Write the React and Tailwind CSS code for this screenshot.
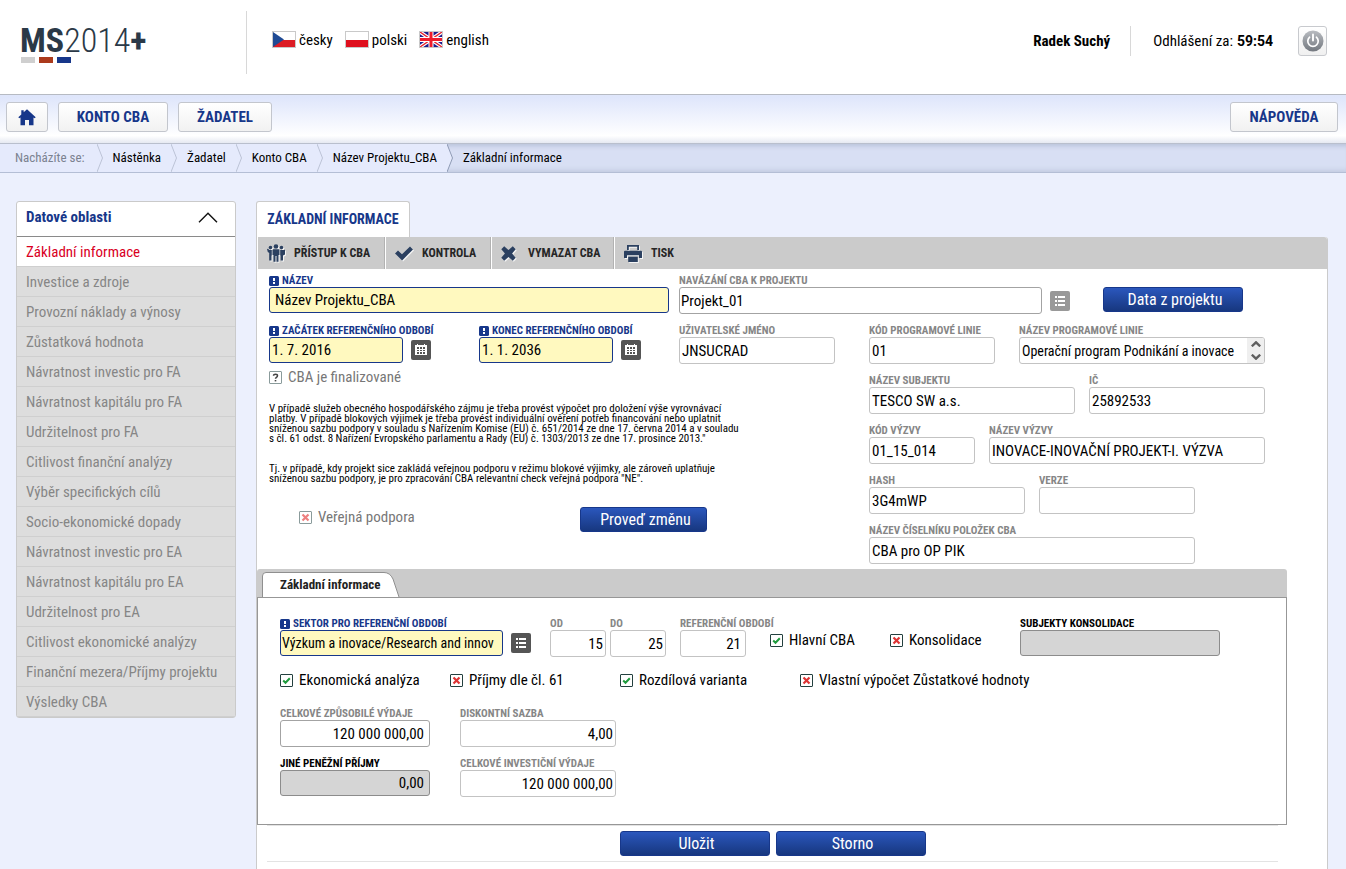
import { useState } from "react";

const FONT = "font-['Roboto_Condensed','Roboto',sans-serif]";

const DATA_AREAS = [
  "Základní informace",
  "Investice a zdroje",
  "Provozní náklady a výnosy",
  "Zůstatková hodnota",
  "Návratnost investic pro FA",
  "Návratnost kapitálu pro FA",
  "Udržitelnost pro FA",
  "Citlivost finanční analýzy",
  "Výběr specifických cílů",
  "Socio-ekonomické dopady",
  "Návratnost investic pro EA",
  "Návratnost kapitálu pro EA",
  "Udržitelnost pro EA",
  "Citlivost ekonomické analýzy",
  "Finanční mezera/Příjmy projektu",
  "Výsledky CBA",
];

/* ---------- icons ---------- */

function FlagCz() {
  return (
    <svg width="24" height="17" viewBox="0 0 24 17" aria-hidden="true">
      <rect width="24" height="17" fill="#c9c9c9" />
      <rect x="1" y="1" width="22" height="8" fill="#fff" />
      <rect x="1" y="9" width="22" height="7" fill="#dc1c24" />
      <path d="M1 1 L12 8.500 L1 16 Z" fill="#1f4a94" />
    </svg>
  );
}

function FlagPl() {
  return (
    <svg width="24" height="17" viewBox="0 0 24 17" aria-hidden="true">
      <rect width="24" height="17" fill="#c9c9c9" />
      <rect x="1" y="1" width="22" height="8" fill="#fff" />
      <rect x="1" y="9" width="22" height="7" fill="#df0f1d" />
    </svg>
  );
}

function FlagGb() {
  return (
    <svg width="24" height="17" viewBox="0 0 24 17" aria-hidden="true">
      <rect width="24" height="17" fill="#c9c9c9" />
      <svg x="1" y="1" width="22" height="15" viewBox="0 0 22 15">
        <rect width="22" height="15" fill="#1c1c8c" />
        <path d="M0 0L22 15M22 0L0 15" stroke="#fff" strokeWidth="3.600" />
        <path d="M0 0L22 15M22 0L0 15" stroke="#e8202c" strokeWidth="1.400" />
        <path d="M11 0V15M0 7.500H22" stroke="#fff" strokeWidth="5" />
        <path d="M11 0V15M0 7.500H22" stroke="#ee1c2c" strokeWidth="3" />
      </svg>
    </svg>
  );
}

function HomeIcon() {
  return (
    <svg width="18" height="17" viewBox="0 0 18 17" fill="#17378a" aria-hidden="true">
      <path d="M9 0.300 L5.700 3.300 V1.300 H3.300 V5.500 L0.300 8.300 L1.300 9.300 L2.500 8.500 V16.300 H7 V11 H11 V16.300 H15.500 V8.500 L16.700 9.300 L17.700 8.300 Z" />
    </svg>
  );
}

function PowerIcon() {
  return (
    <svg width="22" height="22" viewBox="0 0 22 22" aria-hidden="true">
      <defs>
        <linearGradient id="power" x1="0" y1="0" x2="0" y2="1">
          <stop offset="0" stopColor="#b9bcc1" />
          <stop offset="1" stopColor="#73787f" />
        </linearGradient>
      </defs>
      <circle cx="11" cy="11" r="10.500" fill="url(#power)" />
      <path d="M7.600 7.200 A5.200 5.200 0 1 0 14.400 7.200" fill="none" stroke="#fff" strokeWidth="1.700" strokeLinecap="round" />
      <path d="M11 4.500 V10.500" stroke="#fff" strokeWidth="1.900" strokeLinecap="round" />
    </svg>
  );
}

function PeopleIcon() {
  return (
    <svg width="18" height="18" viewBox="0 0 18 18" fill="#2b4060" aria-hidden="true">
      <circle cx="9" cy="2.500" r="2.300" />
      <path d="M6.500 5.200 H11.500 Q12.500 5.200 12.500 6.400 V11 H11.500 V17.700 H9.500 V12 H8.500 V17.700 H6.500 V11 H5.500 V6.400 Q5.500 5.200 6.500 5.200Z" />
      <circle cx="3.500" cy="3.600" r="1.800" />
      <path d="M0 5 L1.100 4.700 L2.200 6 H4.800 V11.500 H4.500 V16.500 H2.200 V9 L0.800 8 Z" />
      <circle cx="14.500" cy="3.600" r="1.800" />
      <path d="M18 5.500 V10.500 L16 11.500 V16.500 H13.600 V11.500 H13.200 V6 H17.200 Z" />
    </svg>
  );
}

function CheckIcon() {
  return (
    <svg width="18" height="15" viewBox="0 0 18 15" fill="#2b4060" aria-hidden="true">
      <path d="M0 7.400 L3 4.400 L7 8.200 L15 0.600 L18 3.400 L7.100 14.400 Z" />
    </svg>
  );
}

function CrossIcon() {
  return (
    <svg width="15" height="15" viewBox="0 0 15 15" fill="#2b4060" aria-hidden="true">
      <path d="M3.200 0.300 L7.500 3.900 L11.800 0.300 L14.700 3.200 L11.100 7.500 L14.700 11.800 L11.800 14.700 L7.500 11.100 L3.200 14.700 L0.300 11.800 L3.900 7.500 L0.300 3.200 Z" />
    </svg>
  );
}

function PrinterIcon() {
  return (
    <svg width="18" height="17" viewBox="0 0 18 17" fill="#2b4060" aria-hidden="true">
      <path d="M3 0 H15 V5 H13.200 V1.800 H4.800 V5 H3 Z" />
      <path d="M1 5.800 H17 Q18 5.800 18 6.800 V13 H15 V10.300 H3 V13 H0 V6.800 Q0 5.800 1 5.800Z" />
      <path d="M4.200 11.700 H13.800 V17 H4.200 Z" />
    </svg>
  );
}

function ListIcon() {
  return (
    <svg width="10" height="10" viewBox="0 0 10 10" fill="#fff" aria-hidden="true">
      <path d="M0 0H2V2H0ZM3 0H10V2H3ZM0 4H2V6H0ZM3 4H10V6H3ZM0 8H2V10H0ZM3 8H10V10H3Z" />
    </svg>
  );
}

function CalendarIcon() {
  return (
    <svg width="12" height="12" viewBox="0 0 12 12" aria-hidden="true">
      <path d="M0 1H2V0H3V1H9V0H10V1H12V11H0Z" fill="#fff" />
      <path d="M2 3H4V5H2ZM5 3H7V5H5ZM8 3H10V5H8ZM2 6H4V7H2ZM5 6H7V7H5ZM8 6H10V7H8ZM2 8H4V10H2ZM5 8H7V10H5ZM8 8H10V10H8Z" fill="#555" />
    </svg>
  );
}

function RequiredIcon() {
  return (
    <svg width="10" height="10" viewBox="0 0 10 10" className="shrink-0" aria-hidden="true">
      <rect width="10" height="10" rx="1.500" fill="#17378a" />
      <path d="M4 2H6V5H4ZM4 6H6V8H4Z" fill="#fff" />
    </svg>
  );
}

/* ---------- form parts ---------- */

const FIELD_TONES = {
  plain: "h-[27px] border-[#c3c3c3] bg-white",
  strong: "h-[27px] border-[#a3a3a3] bg-white",
  required: "h-[26px] border-[#17378a] bg-[#fff9bf]",
  disabled: "h-[26px] border-[#8c8c8c] bg-[#d5d5d5]",
};

const LABEL_TONES = {
  plain: "text-[#868686]",
  strong: "text-[#868686]",
  required: "text-[#17378a]",
  disabled: "text-black",
};

function Field({ id, label, value = "", width, tone = "plain", align = "text-left px-0.5", size = "text-[15px]", children }) {
  return (
    <div className={"flex flex-col shrink-0 " + width}>
      <label htmlFor={id} className={"flex items-center gap-[3px] h-3 text-[11px] leading-3 font-bold whitespace-nowrap " + LABEL_TONES[tone]}>
        {tone === "required" && <RequiredIcon />}
        {label}
      </label>
      <div className="flex items-center gap-2">
        <input
          id={id}
          defaultValue={value}
          disabled={tone === "disabled"}
          className={"min-w-0 flex-1 border rounded-[3px] text-black " + size + " " + align + " " + FIELD_TONES[tone]}
        />
        {children}
      </div>
    </div>
  );
}

function IconButton({ label, color = "bg-[#555]", children }) {
  return (
    <button type="button" aria-label={label} className={"flex size-5 shrink-0 items-center justify-center rounded-[2px] " + color}>
      {children}
    </button>
  );
}

function PrimaryButton({ width, children }) {
  return (
    <button
      type="button"
      className={"h-[25px] shrink-0 rounded-[3px] border border-[#17378a] bg-linear-to-b from-[#2b57bd] to-[#17377f] pl-1 pt-px text-base leading-none font-normal text-white " + width}
    >
      {children}
    </button>
  );
}

function Tick({ label, state, width = "", muted = false }) {
  const [value, setValue] = useState(state);
  return (
    <label className={"flex items-center gap-1.5 text-[15px] leading-5 whitespace-nowrap shrink-0 " + width + (muted ? " text-[#777]" : " text-black")}>
      <span className="relative flex size-[13px] shrink-0">
        <input
          type="checkbox"
          checked={value === "yes"}
          onChange={() => setValue(value === "yes" ? "no" : "yes")}
          className={"size-[13px] appearance-none rounded-[1px] border bg-white " + (muted ? "border-[#8a9b9b]" : "border-[#23403f]")}
        />
        <svg width="13" height="13" viewBox="0 0 13 13" className="pointer-events-none absolute inset-0" fill="none" aria-hidden="true">
          {value === "yes" && <path d="M3.200 6.500 L5.500 8.800 L9.800 4.200" stroke="#1f9a3d" strokeWidth="2" />}
          {value === "no" && <path d="M3.500 3.500 L9.500 9.500 M9.500 3.500 L3.500 9.500" stroke={muted ? "#ee8080" : "#dd3333"} strokeWidth="2.200" />}
          {value === "unknown" && (
            <>
              <path d="M4.500 4.800 Q4.500 3.300 6.500 3.300 Q8.500 3.300 8.500 4.800 Q8.500 5.600 7.400 6.300 Q6.500 6.900 6.500 7.800" stroke="#444" strokeWidth="1.500" />
              <path d="M5.700 9H7.300V10.400H5.700Z" fill="#444" />
            </>
          )}
        </svg>
      </span>
      {label}
    </label>
  );
}

/* ---------- page parts ---------- */

function Language({ flag, name }) {
  return (
    <a href="#" className="flex items-start gap-[3px] text-[15px] leading-[18px] text-black">
      {flag}
      {name}
    </a>
  );
}

function Header() {
  return (
    <header className="flex h-[95px] items-start border-b border-[#b6bac2] bg-white">
      <a href="#" className="ml-5 mt-[21px] flex w-[226px] flex-col text-[#2b3947]">
        <span className="text-[34px] leading-[39px]">
          <b>MS</b>
          <span className="font-light">2014</span>
          <b>+</b>
        </span>
        <span className="ml-px -mt-[3px] flex gap-1">
          <i className="h-1.5 w-3.5 bg-[#cfcfcf]" />
          <i className="h-1.5 w-3.5 bg-[#ab3a1c]" />
          <i className="h-1.5 w-3.5 bg-[#17378a]" />
        </span>
      </a>
      <div className="mt-[11px] flex h-[63px] items-start gap-3 border-l border-[#d8d8d8] pl-[25px] pt-5">
        <Language flag={<FlagCz />} name="česky" />
        <Language flag={<FlagPl />} name="polski" />
        <Language flag={<FlagGb />} name="english" />
      </div>
      <div className="ml-auto mr-[19px] mt-[26px] flex h-[30px] items-center text-[15px] text-black">
        <b className="pr-5">Radek Suchý</b>
        <span className="flex h-full items-center gap-1 border-l border-[#d8d8d8] pl-[22px]">
          Odhlášení za: <b className="font-['Roboto',sans-serif] text-[14px]">59:54</b>
        </span>
        <button type="button" aria-label="Odhlásit" className="ml-[25px] flex h-[30px] w-[29px] items-center justify-center rounded-[3px] border border-[#c8cace] bg-linear-to-b from-white to-[#f0f0f0]">
          <PowerIcon />
        </button>
      </div>
    </header>
  );
}

function NavButton({ width, label, children }) {
  return (
    <button
      type="button"
      aria-label={label}
      className={"flex h-[30px] items-center justify-center rounded-[3px] border border-[#c3c6cd] bg-linear-to-b from-white to-[#f1f1f1] pt-px text-[15px] font-bold text-[#17378a] " + width}
    >
      {children}
    </button>
  );
}

function MainNav() {
  return (
    <nav className="flex h-12 items-center gap-2.5 bg-linear-to-b from-[#dfe6fb] from-5% via-white via-85% to-[#e6e9f2] pl-1.5 pr-2 pb-1">
      <NavButton width="w-[42px]" label="Domů">
        <HomeIcon />
      </NavButton>
      <NavButton width="w-[110px]">KONTO CBA</NavButton>
      <NavButton width="w-[94px]">ŽADATEL</NavButton>
      <span className="flex-1" />
      <NavButton width="w-[108px]">NÁPOVĚDA</NavButton>
    </nav>
  );
}

function Chevron({ last }) {
  return (
    <svg width="6" height="28" viewBox="0 0 6 28" className="mr-2.5" aria-hidden="true">
      {last && <path d="M0 0 L5.500 14 L0 28Z" fill="#e5eafc" />}
      <path d="M0 0 L5.500 14 L0 28" fill="none" stroke={last ? "#8f9bb5" : "#bcc3d6"} />
    </svg>
  );
}

function Breadcrumb() {
  const crumbs = ["Nástěnka", "Žadatel", "Konto CBA", "Název Projektu_CBA"];
  return (
    <nav aria-label="Drobečková navigace" className="flex h-[30px] border-y border-t-[#b9bfcd] border-b-[#b4bed5] bg-[#d8dff4] text-[13px] shadow-[inset_0_6px_5px_-4px_#b9c2d9,inset_0_-6px_5px_-4px_#c3cbe0]">
      <div className="flex items-center bg-[#e5eafc] pl-[15px]">
        <span className="pr-3 text-[#7b8290]">Nacházíte se:</span>
        {crumbs.map((crumb) => (
          <span key={crumb} className="flex items-center pr-2.5">
            <Chevron />
            <a href="#" className="text-black">{crumb}</a>
          </span>
        ))}
      </div>
      <span className="flex items-center text-black">
        <Chevron last />
        Základní informace
      </span>
    </nav>
  );
}

function Sidebar() {
  return (
    <aside className="w-[220px] shrink-0 rounded-[3px] border border-[#cacaca] bg-white">
      <button type="button" className="flex h-[35px] w-full items-center justify-between border-b border-[#8a8a8a] pl-[9px] pr-[17px] pb-1 text-[15px] font-bold text-[#17378a]">
        Datové oblasti
        <svg width="20" height="11" viewBox="0 0 20 11" fill="none" stroke="#111" strokeWidth="1.400" aria-hidden="true">
          <path d="M1 10.300 L10 1.200 L19 10.300" />
        </svg>
      </button>
      <ul>
        {DATA_AREAS.map((area, index) => (
          <li key={area} className={"border-b border-[#cfcfcf] " + (index === 0 ? "bg-white" : "bg-[#dddddd]")}>
            <a href="#" className={"block h-[29px] pl-[9px] text-[15px] leading-[31px] " + (index === 0 ? "text-[#d9001f]" : "text-[#868686]")}>
              {area}
            </a>
          </li>
        ))}
      </ul>
    </aside>
  );
}

function Tool({ icon, width, children, last }) {
  return (
    <button
      type="button"
      className={"flex items-center border-l border-l-white pl-[9px] text-[12px] font-bold text-[#262626] " + width + (last ? "" : " border-r border-r-[#b2b2b2]")}
    >
      <span className="flex w-[27px] drop-shadow-[1px_1px_0_#f4f4f4]">{icon}</span>
      {children}
    </button>
  );
}

function Toolbar() {
  return (
    <div className="flex h-8 rounded-tr-[3px] bg-[#cbcbcb]">
      <Tool icon={<PeopleIcon />} width="w-32">PŘÍSTUP K CBA</Tool>
      <Tool icon={<CheckIcon />} width="w-[106px]">KONTROLA</Tool>
      <Tool icon={<CrossIcon />} width="w-[123px]">VYMAZAT CBA</Tool>
      <Tool icon={<PrinterIcon />} width="w-[90px]" last>TISK</Tool>
    </div>
  );
}

function ProjectForm() {
  return (
    <div className="flex flex-col pl-3 pt-1.5">
      <div className="flex h-[50px] items-start gap-2.5">
        <Field id="name" label="NÁZEV" value="Název Projektu_CBA" width="w-[400px]" tone="required" align="text-left px-[5px]" />
        <Field id="project" label="NAVÁZÁNÍ CBA K PROJEKTU" value="Projekt_01" width="w-[391px]" tone="strong" align="text-left px-px">
          <IconButton label="Vybrat projekt" color="bg-[#999]">
            <ListIcon />
          </IconButton>
        </Field>
        <div className="pl-[23px] pt-3">
          <PrimaryButton width="w-[140px]">Data z projektu</PrimaryButton>
        </div>
      </div>

      <div className="flex items-start">
        <div className="flex w-[600px] shrink-0 flex-col">
          <div className="flex items-start">
            <Field id="ref-start" label="ZAČÁTEK REFERENČNÍHO ODBOBÍ" value="1. 7. 2016" width="w-[162px] mr-12" tone="required">
              <IconButton label="Vybrat začátek">
                <CalendarIcon />
              </IconButton>
            </Field>
            <Field id="ref-end" label="KONEC REFERENČNÍHO OBDOBÍ" value="1. 1. 2036" width="w-[162px] mr-[38px]" tone="required">
              <IconButton label="Vybrat konec">
                <CalendarIcon />
              </IconButton>
            </Field>
            <Field id="user" label="UŽIVATELSKÉ JMÉNO" value="JNSUCRAD" width="w-[156px]" />
          </div>
          <div className="pt-[3px]">
            <Tick label="CBA je finalizované" state="unknown" muted />
          </div>
          <div className="flex w-[490px] flex-col gap-5 pt-[17px] text-[11px] leading-[10px] text-black">
            <p>
              V případě služeb obecného hospodářského zájmu je třeba provést výpočet pro doložení výše vyrovnávací
              <br />
              platby. V případě blokových výjimek je třeba provést individuální ověření potřeb financování nebo uplatnit
              <br />
              sníženou sazbu podpory v souladu s Nařízením Komise (EU) č. 651/2014 ze dne 17. června 2014 a v souladu
              <br />
              s čl. 61 odst. 8 Nařízení Evropského parlamentu a Rady (EU) č. 1303/2013 ze dne 17. prosince 2013."
            </p>
            <p>
              Tj. v případě, kdy projekt sice zakládá veřejnou podporu v režimu blokové výjimky, ale zároveň uplatňuje
              <br />
              sníženou sazbu podpory, je pro zpracování CBA relevantní check veřejná podpora "NE".
            </p>
          </div>
          <div className="flex items-start pl-[30px] pt-[23px]">
            <Tick label="Veřejná podpora" state="no" width="w-[281px]" muted />
            <PrimaryButton width="w-[127px]">Proveď změnu</PrimaryButton>
          </div>
        </div>

        <div className="flex flex-col gap-[11px] pb-[5px]">
          <div className="flex gap-6">
            <Field id="line-code" label="KÓD PROGRAMOVÉ LINIE" value="01" width="w-[126px]" />
            <div className="flex w-[246px] flex-col">
              <label htmlFor="line-name" className="h-3 text-[11px] leading-3 font-bold text-[#868686]">
                NÁZEV PROGRAMOVÉ LINIE
              </label>
              <div className="flex h-[27px] overflow-hidden rounded-[3px] border border-[#c3c3c3]">
                <textarea
                  id="line-name"
                  rows={1}
                  defaultValue="Operační program Podnikání a inovace"
                  className="min-w-0 flex-1 resize-none overflow-hidden whitespace-nowrap pl-0.5 text-[14px] leading-[26px] text-black"
                />
                <div className="flex w-[17px] flex-col bg-[#efefef]">
                  <button type="button" aria-label="Nahoru" className="flex flex-1 items-center justify-center">
                    <svg width="10" height="6" viewBox="0 0 10 6" fill="none" stroke="#5f5f5f" strokeWidth="2.400"><path d="M0.800 5.300 L5 1.300 L9.200 5.300" /></svg>
                  </button>
                  <button type="button" aria-label="Dolů" className="flex flex-1 items-center justify-center">
                    <svg width="10" height="6" viewBox="0 0 10 6" fill="none" stroke="#5f5f5f" strokeWidth="2.400"><path d="M0.800 0.700 L5 4.700 L9.200 0.700" /></svg>
                  </button>
                </div>
              </div>
            </div>
          </div>
          <div className="flex gap-3.5">
            <Field id="subject" label="NÁZEV SUBJEKTU" value="TESCO SW a.s." width="w-[206px]" />
            <Field id="ic" label="IČ" value="25892533" width="w-[176px]" />
          </div>
          <div className="flex gap-3.5">
            <Field id="call-code" label="KÓD VÝZVY" value="01_15_014" width="w-[106px]" />
            <Field id="call-name" label="NÁZEV VÝZVY" value="INOVACE-INOVAČNÍ PROJEKT-I. VÝZVA" width="w-[276px]" />
          </div>
          <div className="flex gap-3.5">
            <Field id="hash" label="HASH" value="3G4mWP" width="w-[156px]" />
            <Field id="version" label="VERZE" width="w-[156px]" />
          </div>
          <Field id="codebook" label="NÁZEV ČÍSELNÍKU POLOŽEK CBA" value="CBA pro OP PIK" width="w-[326px]" />
        </div>
      </div>
    </div>
  );
}

function SectorForm() {
  return (
    <div className="mr-10">
      <div className="flex h-7 items-end rounded-t-[3px] bg-[#cbcbcb] pl-[5px]">
        <button type="button" className="relative h-[25px] w-[138px] text-left text-[13px] font-bold text-[#222]">
          <svg width="138" height="25" viewBox="0 0 138 25" className="absolute inset-0" aria-hidden="true">
            <path d="M0.500 25 V4 Q0.500 0.500 4 0.500 H122 Q128 0.500 131 7 L137 25" fill="#fff" stroke="#8f8f8f" />
          </svg>
          <span className="relative pl-[18px]">Základní informace</span>
        </button>
      </div>
      <div className="flex h-[228px] flex-col border border-[#979797] pl-[22px] pt-5">
        <div className="flex items-start">
          <Field id="sector" label="SEKTOR PRO REFERENČNÍ OBDOBÍ" value="Výzkum a inovace/Research and innov" width="w-[251px] mr-[19px]" tone="required" align="text-left px-px" size="text-[14px]">
            <IconButton label="Vybrat sektor">
              <ListIcon />
            </IconButton>
          </Field>
          <Field id="from" label="OD" value="15" width="w-14 mr-1" align="text-right px-0.5" />
          <Field id="to" label="DO" value="25" width="w-14 mr-3.5" align="text-right px-0.5" />
          <Field id="period" label="REFERENČNÍ OBDOBÍ" value="21" width="w-[66px] mr-6" align="text-right px-1" />
          <div className="flex pt-3">
            <Tick label="Hlavní CBA" state="yes" width="w-[120px]" />
            <Tick label="Konsolidace" state="no" width="w-[130px]" />
          </div>
          <Field id="consolidation" label="SUBJEKTY KONSOLIDACE" width="w-[200px]" tone="disabled" />
        </div>
        <div className="flex pt-[13px] pb-[18px]">
          <Tick label="Ekonomická analýza" state="yes" width="w-[170px]" />
          <Tick label="Příjmy dle čl. 61" state="no" width="w-[170px]" />
          <Tick label="Rozdílová varianta" state="yes" width="w-[180px]" />
          <Tick label="Vlastní výpočet Zůstatkové hodnoty" state="no" />
        </div>
        <div className="flex gap-[30px]">
          <Field id="eligible" label="CELKOVÉ ZPŮSOBILÉ VÝDAJE" value="120 000 000,00" width="w-[150px]" tone="strong" align="text-right px-[5px]" />
          <Field id="discount" label="DISKONTNÍ SAZBA" value="4,00" width="w-[156px]" align="text-right px-0.5" />
        </div>
        <div className="flex gap-[30px] pt-[11px]">
          <Field id="other-income" label="JINÉ PENĚŽNÍ PŘÍJMY" value="0,00" width="w-[150px]" tone="disabled" align="text-right px-[5px]" />
          <Field id="investment" label="CELKOVÉ INVESTIČNÍ VÝDAJE" value="120 000 000,00" width="w-[156px]" align="text-right px-0.5" />
        </div>
      </div>
    </div>
  );
}

export default function App() {
  return (
    <div className={"flex min-h-screen flex-col bg-[#ecf0fd] " + FONT}>
      <Header />
      <MainNav />
      <Breadcrumb />
      <div className="flex flex-1 items-start gap-5 pl-4 pr-[18px] pt-7">
        <Sidebar />
        <main className="flex min-w-0 flex-1 flex-col self-stretch">
          <h1 className="flex h-9 w-[154px] items-center justify-center rounded-t-[3px] border border-b-0 border-[#cbcbcb] bg-white text-[14px] font-bold whitespace-nowrap text-[#17378a]">
            ZÁKLADNÍ INFORMACE
          </h1>
          <form className="flex flex-1 flex-col rounded-tr-[3px] border-x border-[#cbcbcb] bg-white" onSubmit={(event) => event.preventDefault()}>
            <Toolbar />
            <ProjectForm />
            <SectorForm />
            <div className="ml-2.5 mr-[49px] flex justify-center gap-1.5 border-y border-[#e3e3e3] py-[5px]">
              <PrimaryButton width="w-[150px]">Uložit</PrimaryButton>
              <PrimaryButton width="w-[150px]">Storno</PrimaryButton>
            </div>
          </form>
        </main>
      </div>
    </div>
  );
}
